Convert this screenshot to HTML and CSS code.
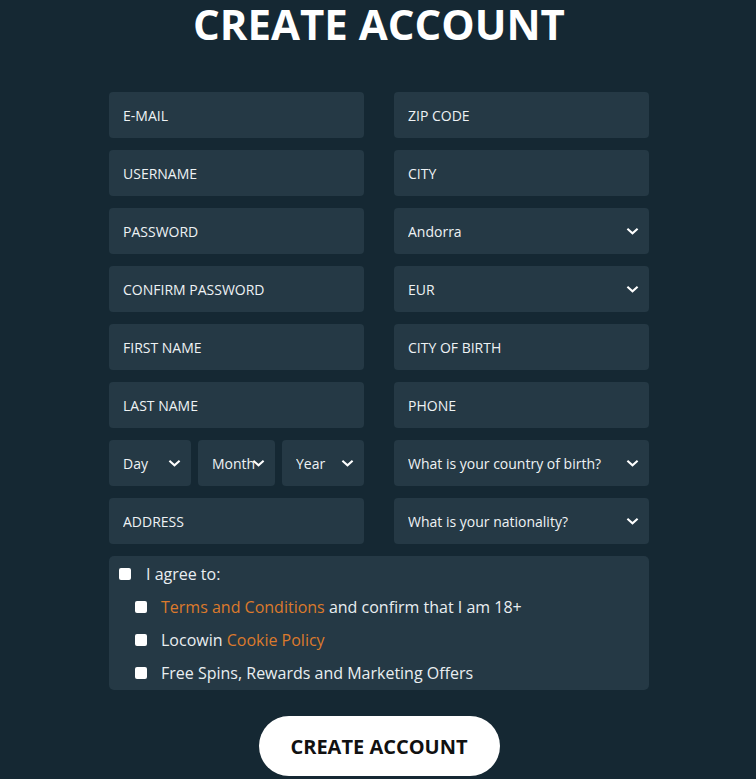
FILE: index.html
```html
<!DOCTYPE html>
<html lang="en">
<head>
    <meta charset="UTF-8">
    <meta name="viewport" content="width=device-width, initial-scale=1.0">
    <title>Create Account</title>
    <link rel="stylesheet" href="styles.css">
</head>
<body>
    <div id="app">
        <h1>CREATE ACCOUNT</h1>

        <form id="signup-form">
            <div class="columns">
                <!-- Left column -->
                <div class="column">
                    <input class="field" type="email" placeholder="E-MAIL">
                    <input class="field" type="text" placeholder="USERNAME">
                    <input class="field" type="password" placeholder="PASSWORD">
                    <input class="field" type="password" placeholder="CONFIRM PASSWORD">
                    <input class="field" type="text" placeholder="FIRST NAME">
                    <input class="field" type="text" placeholder="LAST NAME">

                    <div class="date-row">
                        <div class="select-wrap day">
                            <select class="field"><option>Day</option></select>
                            <svg class="chevron" viewBox="0 0 14 8"><path d="M1.5 1.5l5.5 5 5.5-5"/></svg>
                        </div>
                        <div class="select-wrap month">
                            <select class="field"><option>Month</option></select>
                            <svg class="chevron" viewBox="0 0 14 8"><path d="M1.5 1.5l5.5 5 5.5-5"/></svg>
                        </div>
                        <div class="select-wrap year">
                            <select class="field"><option>Year</option></select>
                            <svg class="chevron" viewBox="0 0 14 8"><path d="M1.5 1.5l5.5 5 5.5-5"/></svg>
                        </div>
                    </div>

                    <input class="field" type="text" placeholder="ADDRESS">
                </div>

                <!-- Right column -->
                <div class="column">
                    <input class="field" type="text" placeholder="ZIP CODE">
                    <input class="field" type="text" placeholder="CITY">
                    <div class="select-wrap">
                        <select class="field"><option>Andorra</option></select>
                        <svg class="chevron" viewBox="0 0 14 8"><path d="M1.5 1.5l5.5 5 5.5-5"/></svg>
                    </div>
                    <div class="select-wrap">
                        <select class="field"><option>EUR</option></select>
                        <svg class="chevron" viewBox="0 0 14 8"><path d="M1.5 1.5l5.5 5 5.5-5"/></svg>
                    </div>
                    <input class="field" type="text" placeholder="CITY OF BIRTH">
                    <input class="field" type="tel" placeholder="PHONE">
                    <div class="select-wrap">
                        <select class="field"><option>What is your country of birth?</option></select>
                        <svg class="chevron" viewBox="0 0 14 8"><path d="M1.5 1.5l5.5 5 5.5-5"/></svg>
                    </div>
                    <div class="select-wrap">
                        <select class="field"><option>What is your nationality?</option></select>
                        <svg class="chevron" viewBox="0 0 14 8"><path d="M1.5 1.5l5.5 5 5.5-5"/></svg>
                    </div>
                </div>
            </div>

            <!-- Agreements -->
            <div class="agree-box">
                <label class="check-row">
                    <input type="checkbox">
                    <span>I agree to:</span>
                </label>
                <label class="check-row sub">
                    <input type="checkbox">
                    <span><a href="#">Terms and Conditions</a> and confirm that I am 18+</span>
                </label>
                <label class="check-row sub">
                    <input type="checkbox">
                    <span>Locowin <a href="#">Cookie Policy</a></span>
                </label>
                <label class="check-row sub">
                    <input type="checkbox">
                    <span>Free Spins, Rewards and Marketing Offers</span>
                </label>
            </div>

            <button type="submit" id="create-btn">CREATE ACCOUNT</button>
        </form>
    </div>
</body>
</html>
```

FILE: styles.css
```css
body {
    font-family: 'Open Sans', 'Noto Sans', sans-serif;
    margin: 0;
    padding: 0;
    background-color: #152833;
    color: #e9eef1;
}

#app {
    width: 540px;
    margin-left: calc(50% - 269px);
}

h1 {
    margin: 0 0 44px;
    font-size: 42px;
    line-height: 48px;
    font-weight: 700;
    text-align: center;
    color: #ffffff;
}

.columns {
    display: flex;
    gap: 30px;
}

.column {
    flex: 1;
    display: flex;
    flex-direction: column;
    gap: 12px;
}

.field {
    display: block;
    width: 100%;
    height: 46px;
    box-sizing: border-box;
    padding: 0 14px;
    border: none;
    border-radius: 4px;
    background-color: #253945;
    color: #eef2f4;
    font-family: inherit;
    font-size: 14px;
    outline: none;
}

.field::placeholder {
    color: #eef2f4;
    opacity: 1;
}

select.field {
    appearance: none;
    -webkit-appearance: none;
    padding-right: 30px;
}

/* Select with chevron */
.select-wrap {
    position: relative;
}

.chevron {
    position: absolute;
    top: 19px;
    right: 10px;
    width: 13px;
    height: 8px;
    fill: none;
    stroke: #ffffff;
    stroke-width: 2.2;
    pointer-events: none;
}

.date-row {
    display: flex;
    gap: 7px;
}

.date-row .day,
.date-row .year {
    width: 82px;
}

.date-row .month {
    width: 77px;
}

.date-row select.field {
    padding-right: 0;
}

/* Agreements */
.agree-box {
    margin-top: 12px;
    padding: 1px 0 0;
    background-color: #253945;
    border-radius: 5px;
}

.check-row {
    display: flex;
    align-items: center;
    height: 33.25px;
    padding-left: 10px;
    font-size: 16px;
}

.check-row.sub {
    padding-left: 26px;
}

.check-row input {
    appearance: none;
    -webkit-appearance: none;
    width: 12px;
    height: 12px;
    margin: 0 15px 0 0;
    background-color: #ffffff;
    border-radius: 2px;
    flex-shrink: 0;
}

.check-row.sub input {
    margin-right: 14px;
}

.check-row a {
    color: #dc7a2c;
    text-decoration: none;
}

button {
    font-family: inherit;
    cursor: pointer;
}

#create-btn {
    display: block;
    width: 241px;
    height: 60px;
    margin: 26px auto 0;
    border: none;
    border-radius: 30px;
    background-color: #ffffff;
    color: #111111;
    font-size: 20px;
    font-weight: 700;
}
```
